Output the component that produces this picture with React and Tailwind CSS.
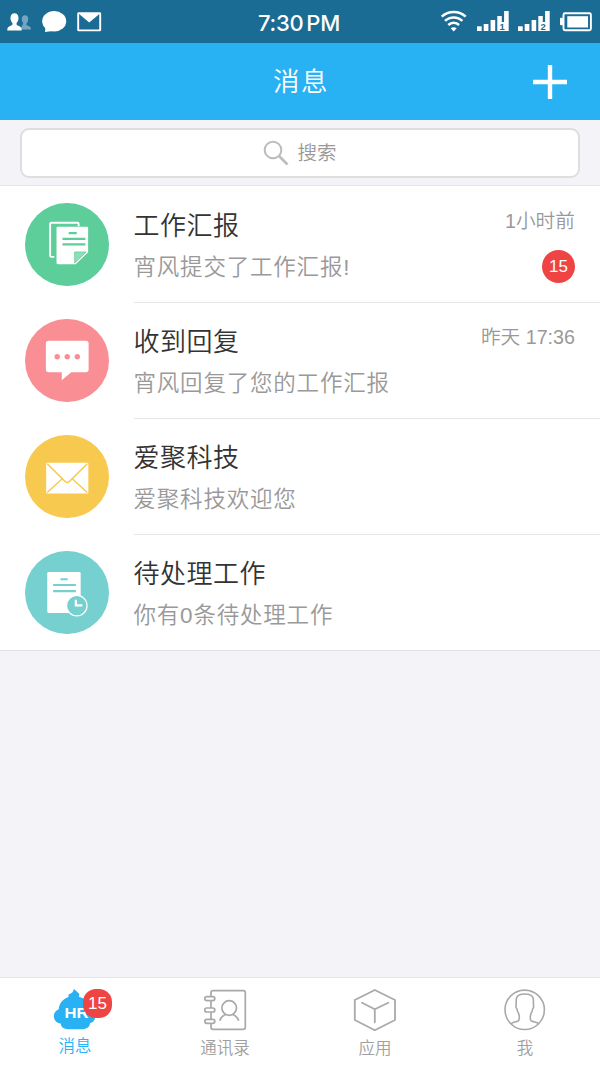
const FONT = 'font-["Liberation_Sans","Noto_Sans_CJK_SC",sans-serif]'

function StatusLeft() {
  return (
    <svg width="110" height="43" viewBox="0 0 110 43" fill="#fff">
      <path opacity=".4" d="M20 29.500h11c0-3-1.500-3.300-4.600-4.300v-1.700c1.500-1.400 1.800-3.200 1.800-4.800 0-2.200-1.300-3.400-3.200-3.400s-3.200 1.200-3.200 3.400c0 1.600.5 3.400 1.600 4.600z" />
      <path d="M7.300 30.500c0-3.300 1-4 4.500-5.300.8-.3.900-1.900.3-2.700-1-1.200-1.600-2.600-1.600-4.600 0-3 1.600-4.700 4-4.700s4 1.700 4 4.700c0 2-.6 3.400-1.600 4.600-.6.800-.5 2.400.3 2.700 3.500 1.300 4.500 2 4.500 5.300z" />
      <ellipse cx="54.200" cy="21.200" rx="12" ry="10.300" />
      <path d="M45.500 26 45 32l8-1z" />
      <rect x="78.200" y="13.200" width="22" height="17.200" rx=".5" fill="none" stroke="#fff" strokeWidth="1.900" />
      <path d="M80 14h18.500v.8L89.200 22.500 80 14.800z" />
    </svg>
  )
}

function Signal({ x, digit }) {
  return (
    <g transform={`translate(${x} 0)`}>
      <rect x="0" y="26.300" width="4.700" height="4.700" />
      <rect x="6.700" y="24" width="4.700" height="7" />
      <rect x="13.600" y="20" width="4.600" height="11" />
      <path d="M20.300 16h4.500v6h2.300V11h4.600v20H20.300z" />
      <text x="22.500" y="30" fontSize="9.500" fontWeight="700" fill="#1a6c94">{digit}</text>
    </g>
  )
}

function StatusRight() {
  return (
    <svg width="170" height="43" viewBox="0 0 170 43" fill="#fff">
      <g fill="none" stroke="#fff" strokeWidth="2.500">
        <path d="M11.700 16.700a17.500 17.500 0 0 1 24 0" />
        <path d="M15 20.900a12.600 12.600 0 0 1 17.400 0" />
        <path d="M18.300 25a7.800 7.800 0 0 1 10.800 0" />
      </g>
      <path d="M20.700 28.300q3-2 6 0l-3 3.200z" />
      <Signal x={47} digit="1" />
      <Signal x={88} digit="2" />
      <rect x="133.500" y="13.300" width="27.400" height="17" rx="1.500" fill="none" stroke="#fff" strokeWidth="1.900" />
      <rect x="137.300" y="16.200" width="20.700" height="11.300" />
      <rect x="130" y="17.700" width="3" height="7.600" rx="1" />
    </svg>
  )
}

function ReportIcon() {
  return (
    <svg viewBox="0 0 84 84" className="size-full">
      <path d="M54 23.500V21q0-1.200-1.200-1.200H26.500q-1.200 0-1.200 1.200v32q0 1.200 1.200 1.200h3" fill="none" stroke="#fff" strokeWidth="1.900" />
      <path d="M33 24h29.300q1.200 0 1.200 1.200v24.300L51 61.500H33q-1.300 0-1.300-1.300V25.200Q31.700 24 33 24z" fill="#fff" />
      <path d="M50 49.300h11.500L50 60.300z" fill="#8edfb8" stroke="#5dcd9a" strokeWidth=".8" />
      <path d="M44 30.300h8M37.700 36h23M37.700 41.700h23" stroke="#5dcd9a" strokeWidth="2.200" />
    </svg>
  )
}

function ReplyIcon() {
  return (
    <svg viewBox="0 0 84 84" className="size-full">
      <path d="M24 22h37.300q2.700 0 2.700 2.700V51q0 2.500-2.700 2.500H46.500L37 61.500v-8H24q-3 0-3-2.500V24.700Q21 22 24 22z" fill="#fff" />
      <g fill="#f98e94">
        <circle cx="32.400" cy="38" r="2.700" />
        <circle cx="42.500" cy="38" r="2.700" />
        <circle cx="52.600" cy="38" r="2.700" />
      </g>
    </svg>
  )
}

function MailIcon() {
  return (
    <svg viewBox="0 0 84 84" className="size-full">
      <rect x="21.300" y="28" width="42.400" height="30.800" rx="1" fill="#fff" />
      <path d="m22.300 29 18.200 17.900q2 1.600 4 0L62.700 29M37.700 43.700 22.300 57.900M47.300 43.700l15.400 14.200" fill="none" stroke="#f8c94f" strokeWidth="1.400" />
    </svg>
  )
}

function TodoIcon() {
  return (
    <svg viewBox="0 0 84 84" className="size-full">
      <rect x="22.400" y="21" width="33.600" height="41.300" rx="1.500" fill="#fff" />
      <path d="M35.700 28.400H43M28.300 34.200h22.900M28.300 40.300h22.900" stroke="#76d0d0" strokeWidth="2.200" />
      <circle cx="52.100" cy="55" r="10.300" fill="#76d0d0" stroke="#fff" strokeWidth="1.200" />
      <path d="M51.200 49v5.800h6.500" fill="none" stroke="#fff" strokeWidth="2.300" />
    </svg>
  )
}

function HomeTab() {
  return (
    <svg width="60" height="50" viewBox="0 0 60 50">
      <path d="M15.700 38.500C7.500 37.800 6.500 27 13.700 24.300c.5-6.500 4.500-10.500 10-12.600-1.500-3 2.500-2.700 4-4.700L29 4l5 4.500q.8 1.500-.3 3.200C40.500 13.500 45 18 46 24.500c6.500 2 5.500 12.500-1 13.500-.5 7.500-9 6.200-14 6.300-6 0-15 .8-15.300-5.800z" fill="#29b2f3" />
      <text x="19.500" y="33.300" fontSize="14" fontWeight="700" textLength="24" lengthAdjust="spacingAndGlyphs" fill="#fff">HR</text>
    </svg>
  )
}

function ContactsTab() {
  return (
    <svg width="60" height="50" viewBox="0 0 60 50" fill="none" stroke="#a9a9a9" strokeWidth="1.700">
      <rect x="16" y="5.700" width="34.300" height="38.600" rx="2" />
      <g fill="#fff">
        <rect x="9.800" y="11.600" width="10" height="4" rx="2" />
        <rect x="9.800" y="23" width="10" height="4" rx="2" />
        <rect x="9.800" y="34.300" width="10" height="4" rx="2" />
      </g>
      <circle cx="34.200" cy="23" r="7.300" />
      <path d="M24.700 35.700q1.500-4.500 5.800-6.200M43.700 35.700q-1.500-4.500-5.800-6.200" />
    </svg>
  )
}

function AppsTab() {
  return (
    <svg width="60" height="50" viewBox="0 0 60 50" fill="none" stroke="#a9a9a9" strokeWidth="1.800" strokeLinejoin="round" strokeLinecap="round">
      <path d="M29.800 5 50 15v20L29.800 45.200 9.800 35V15z" />
      <path d="m17 17.800 12.800 6.500 13.500-6.500M29.800 24.300v13" />
    </svg>
  )
}

function MeTab() {
  return (
    <svg width="60" height="50" viewBox="0 0 60 50" fill="none" stroke="#a9a9a9" strokeWidth="1.600">
      <circle cx="29.700" cy="24.800" r="19.700" />
      <path d="M16 38.700c3-2 5.300-1.700 7.200-2.700 1.200-.8 1.300-3.500.8-6-.3-2.500-1.800-3-2-6-.7-.7-1.200-2-1-3.300.6-2.500-.2-5 .4-7.500.8-3.200 4.300-4.200 8.400-4.200s7.600 1 8.400 4.200c.6 2.500-.2 5 .4 7.500.2 1.300-.3 2.600-1 3.300-.2 3-1.700 3.500-2 6-.5 2.500-.4 5.200.8 6 1.900 1 4.200.7 7.200 2.700" />
    </svg>
  )
}

const messages = [
  { title: '工作汇报', text: '宵风提交了工作汇报!', time: '1小时前', badge: 15, bg: 'bg-[#5dcd9a]', Icon: ReportIcon },
  { title: '收到回复', text: '宵风回复了您的工作汇报', time: '昨天 17:36', bg: 'bg-[#f98e94]', Icon: ReplyIcon },
  { title: '爱聚科技', text: '爱聚科技欢迎您', bg: 'bg-[#f8c94f]', Icon: MailIcon },
  { title: '待处理工作', text: '你有0条待处理工作', bg: 'bg-[#76d0d0]', Icon: TodoIcon },
]

const tabs = [
  { label: '消息', Icon: HomeTab, active: true, badge: 15 },
  { label: '通讯录', Icon: ContactsTab },
  { label: '应用', Icon: AppsTab },
  { label: '我', Icon: MeTab },
]

export default function App() {
  return (
    <div className={`${FONT} flex h-[1067px] w-[600px] flex-col overflow-hidden bg-[#f3f3f8] font-[350]`}>
      {/* Status bar */}
      <div className="flex h-[43px] shrink-0 items-center justify-between bg-[#1a6c94]">
        <StatusLeft />
        <span className="ml-[58px] whitespace-nowrap pt-0.5 font-[Inter] text-[22px] font-[550] leading-none tracking-[-0.2px] text-white [word-spacing:-3px]">7:30 PM</span>
        <StatusRight />
      </div>

      {/* Header */}
      <header className="grid h-[77px] shrink-0 grid-cols-3 items-center bg-[#29b2f3] text-white">
        <span />
        <h1 className="pl-0.5 pt-0.5 text-center text-[26.500px] font-[350] leading-none tracking-[1.500px]">消息</h1>
        <button className="mr-[32px] justify-self-end">
          <svg width="36" height="36" viewBox="0 0 36 36" stroke="#fff" strokeWidth="4.400">
            <path d="M18 1v34M1 18h34" />
          </svg>
        </button>
      </header>

      {/* Search */}
      <div className="h-[66px] shrink-0 border-b border-[#e6e6e8] px-5 pt-2">
        <div className="flex h-[50px] items-center justify-center gap-2 rounded-[9px] border-2 border-[#dedede] bg-white text-[#999]">
          <svg width="26" height="26" viewBox="0 0 26 26" fill="none" stroke="#bcbcbc" strokeWidth="2">
            <circle cx="10" cy="10" r="8.300" />
            <path d="m16 16 8.500 8.500" strokeWidth="2.600" />
          </svg>
          <span className="pt-0.5 text-[19.500px] leading-none">搜索</span>
        </div>
      </div>

      {/* Messages */}
      <ul className="shrink-0 border-b border-[#e2e2e4] bg-white">
        {messages.map(({ title, text, time, badge, bg, Icon }, i) => (
          <li key={title} className="flex h-[116px] pl-[25px]">
            <div className={`${bg} mt-[16.500px] size-[83.500px] shrink-0 rounded-full`}>
              <Icon />
            </div>
            <div className={`ml-[25px] flex flex-1 justify-between border-t pr-[25px] ${i > 0 ? 'border-[#e8e6e8]' : 'border-transparent'}`}>
              <div className="whitespace-nowrap pt-[24px]">
                <h2 className="text-[26px] font-[350] leading-[30px] tracking-[0.500px] text-[#333]">{title}</h2>
                <p className="mt-[13px] text-[22.500px] leading-[28px] tracking-[0.800px] text-[#999]">{text}</p>
              </div>
              <div className="flex flex-col items-end pt-[22px]">
                <time className="h-6 whitespace-nowrap text-[19.700px] leading-6 text-[#999]">{time}</time>
                {badge && (
                  <span className="mt-[17px] flex size-[33px] items-center justify-center rounded-full bg-[#ee4444] text-[17px] text-white">{badge}</span>
                )}
              </div>
            </div>
          </li>
        ))}
      </ul>

      {/* Tab bar */}
      <nav className="mt-auto grid h-[90px] shrink-0 grid-cols-4 border-t border-[#e6e6e8] bg-white">
        {tabs.map(({ label, Icon, active, badge }) => (
          <div key={label} className={`relative flex flex-col items-center pt-[7px] ${active ? 'text-[#29b2f3]' : 'text-[#a0a0a0]'}`}>
            <Icon />
            <span className={`text-[16.500px] leading-6 ${active ? '-mt-px' : 'mt-px'}`}>{label}</span>
            {badge && (
              <span className="absolute left-[83px] top-[11px] flex size-[29px] items-center justify-center rounded-[13px] bg-[#ee4444] text-[17px] text-white">{badge}</span>
            )}
          </div>
        ))}
      </nav>
    </div>
  )
}
